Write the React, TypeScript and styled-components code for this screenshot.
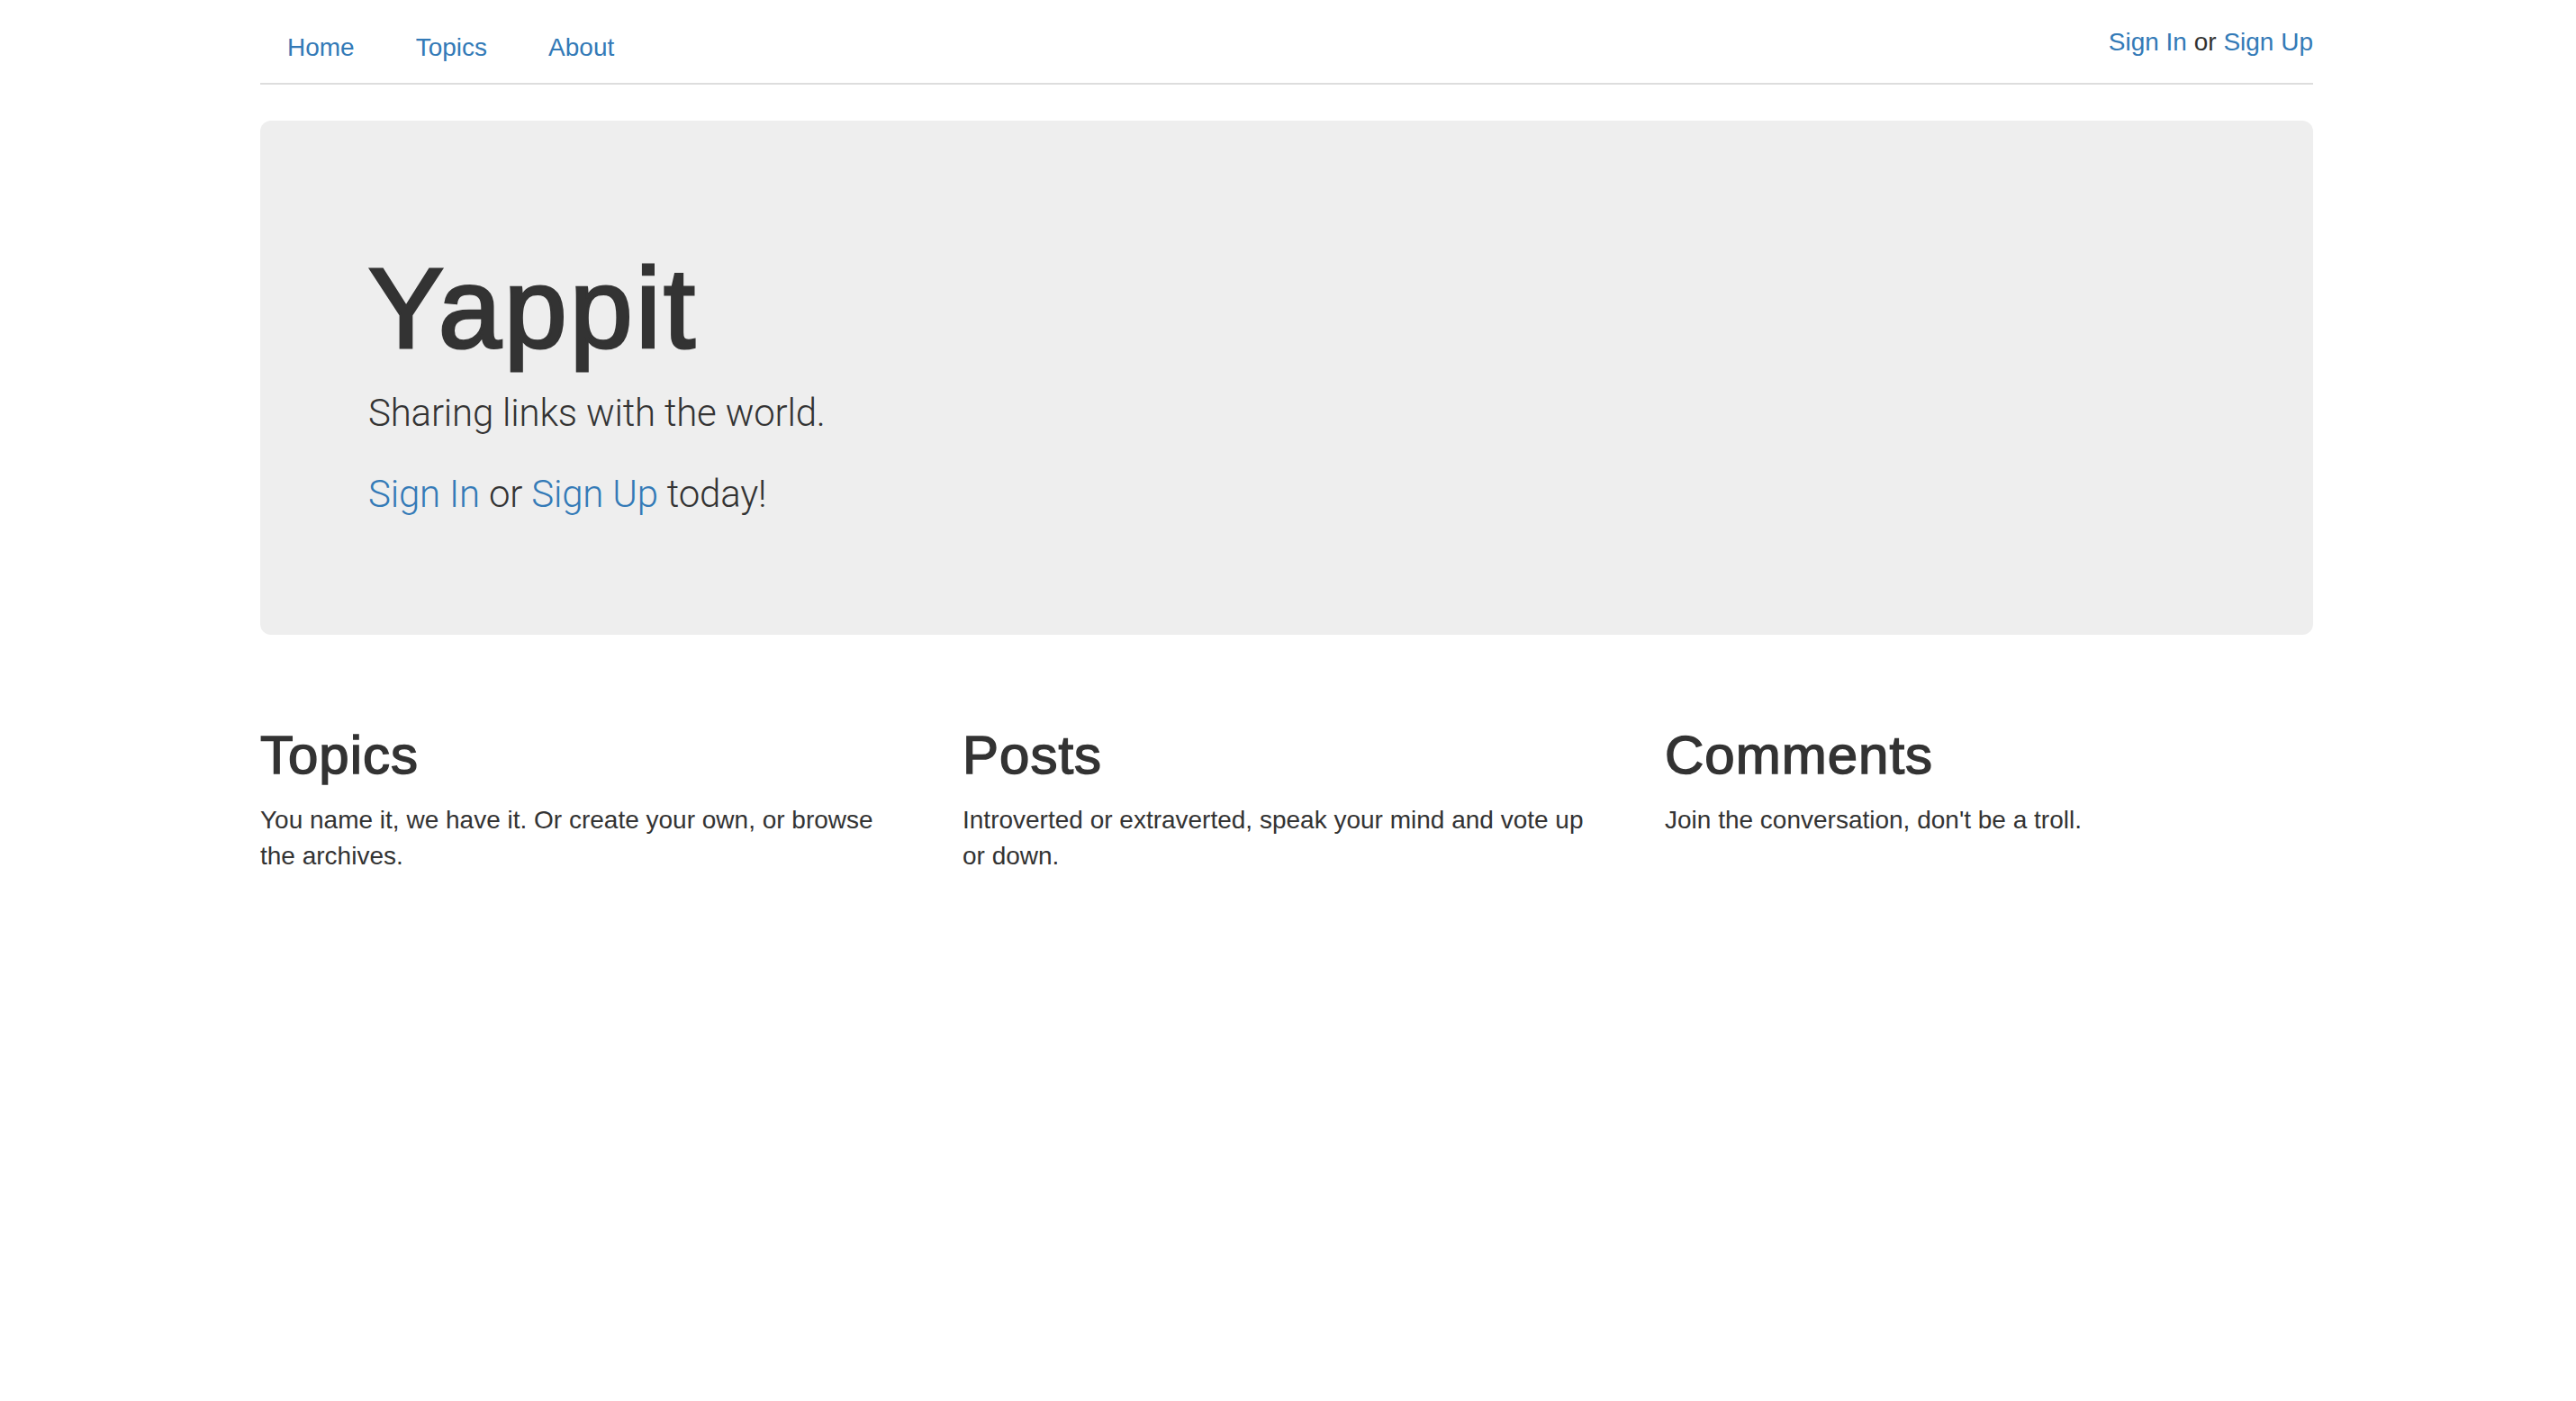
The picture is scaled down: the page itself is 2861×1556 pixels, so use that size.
import React from "react";
import styled, { createGlobalStyle } from "styled-components";

const GlobalStyle = createGlobalStyle`
  html, body {
    margin: 0;
    padding: 0;
    background: #fff;
  }
  body {
    font-family: "Liberation Sans", Arial, Helvetica, sans-serif;
    font-size: 28px;
    line-height: 40px;
    color: #333;
  }
`;

const Page = styled.div`
  padding-right: 3px;
`;

const Container = styled.div`
  width: 2280px;
  margin: 0 auto;
`;

const Header = styled.header`
  display: flex;
  justify-content: space-between;
  align-items: flex-start;
  padding-top: 10px;
  border-bottom: 2px solid #ddd;
`;

const NavList = styled.ul`
  list-style: none;
  margin: 0;
  padding: 0;
  display: flex;
`;

const NavItem = styled.li`
  margin-right: 8px;
`;

const NavLink = styled.a`
  display: block;
  padding: 23px 30px 19px;
  line-height: 40px;
  color: #337ab7;
  text-decoration: none;
`;

const Auth = styled.div`
  padding-top: 17px;
  line-height: 40px;
`;

const Link = styled.a`
  color: #337ab7;
  text-decoration: none;
`;

const Jumbotron = styled.section`
  margin: 40px 0 60px;
  padding: 96px 120px;
  background: #eee;
  border-radius: 12px;
`;

const Title = styled.h1`
  margin: 44px 0 16px;
  font-size: 126px;
  line-height: 1.1;
  font-weight: 500;
  letter-spacing: 3px;
  color: #333;
  -webkit-text-stroke: 3px #333;
`;

const Lead = styled.p`
  margin: 0 0 30px;
  font-family: Roboto, "Liberation Sans", sans-serif;
  font-weight: 300;
  font-size: 42px;
  line-height: 60px;
  letter-spacing: -0.2px;
`;

const Features = styled.div`
  display: grid;
  grid-template-columns: repeat(3, 720px);
  column-gap: 60px;
`;

const Feature = styled.div``;

const FeatureTitle = styled.h2`
  margin: 41px 0 19px;
  font-size: 60px;
  line-height: 66px;
  font-weight: 500;
  letter-spacing: 1px;
  color: #333;
  -webkit-text-stroke: 1.5px #333;
`;

const FeatureText = styled.p`
  margin: 0 0 20px;
`;

const features = [
  {
    title: "Topics",
    text: "You name it, we have it. Or create your own, or browse the archives.",
  },
  {
    title: "Posts",
    text: "Introverted or extraverted, speak your mind and vote up or down.",
  },
  {
    title: "Comments",
    text: "Join the conversation, don't be a troll.",
  },
];

export default function App() {
  return (
    <Page>
      <GlobalStyle />
      <Container>
        <Header>
          <NavList>
            {["Home", "Topics", "About"].map((l) => (
              <NavItem key={l}>
                <NavLink href="#">{l}</NavLink>
              </NavItem>
            ))}
          </NavList>
          <Auth>
            <Link href="#">Sign In</Link> or <Link href="#">Sign Up</Link>
          </Auth>
        </Header>
        <Jumbotron>
          <Title>Yappit</Title>
          <Lead>Sharing links with the world.</Lead>
          <Lead>
            <Link href="#">Sign In</Link> or <Link href="#">Sign Up</Link> today!
          </Lead>
        </Jumbotron>
        <Features>
          {features.map((f) => (
            <Feature key={f.title}>
              <FeatureTitle>{f.title}</FeatureTitle>
              <FeatureText>{f.text}</FeatureText>
            </Feature>
          ))}
        </Features>
      </Container>
    </Page>
  );
}
